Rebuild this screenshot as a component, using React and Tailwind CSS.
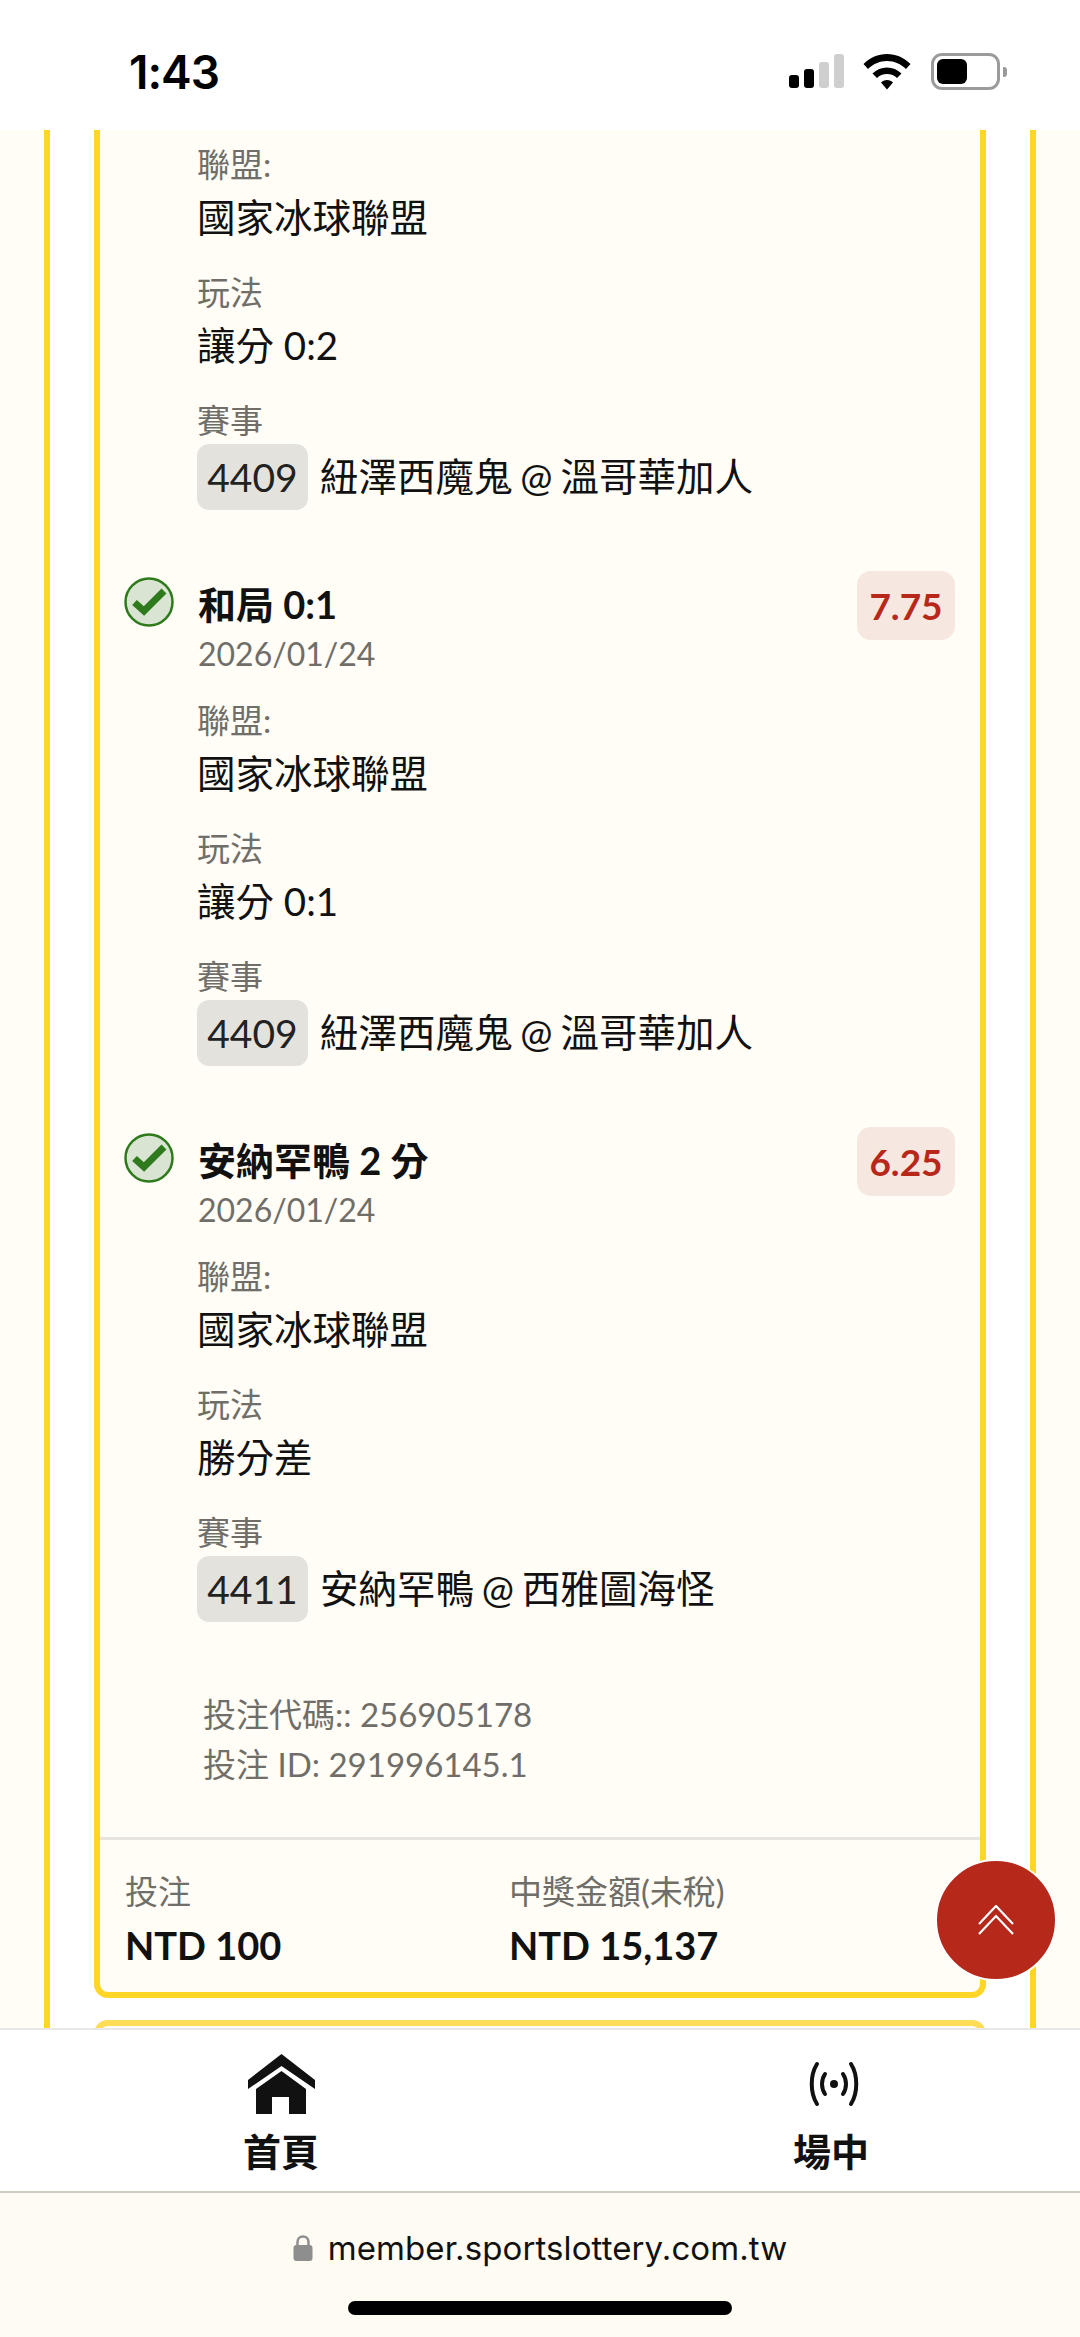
// Bet slip detail on a phone - selections, totals, bottom nav
import React from 'react';

const selections = [
  { id: 's0', league: '國家冰球聯盟', market: '讓分 0:2', code: '4409', match: '紐澤西魔鬼 @ 溫哥華加人', cut: true },
  { id: 's1', title: '和局 0:1', price: '7.75', date: '2026/01/24', league: '國家冰球聯盟', market: '讓分 0:1', code: '4409', match: '紐澤西魔鬼 @ 溫哥華加人' },
  { id: 's2', title: '安納罕鴨 2 分', price: '6.25', date: '2026/01/24', league: '國家冰球聯盟', market: '勝分差', code: '4411', match: '安納罕鴨 @ 西雅圖海怪' },
];

const CheckIcon = () => (
  <svg width="50" height="50" viewBox="0 0 50 50" className="shrink-0 -mt-[2px]">
    <circle cx="25" cy="25" r="23.5" fill="#d9e5d2" stroke="#2f7a1d" strokeWidth="2.5" />
    <path d="M10.5 25.5 L20 34 L40 14" fill="none" stroke="#2f7a1d" strokeWidth="7" />
  </svg>
);

const StatusBar = () => (
  <div className="h-[130px] shrink-0 bg-white flex items-start justify-between pl-[129px] pr-[73px] pt-[47px]">
    <span className="text-[46px] leading-[50px] font-semibold text-black font-['Inter',sans-serif] tracking-[-1px]">1:43</span>
    <div className="flex items-start pt-[7px]">
      <div className="flex items-end gap-[5px] h-[35px] pb-px">
        <div className="w-[10px] h-[13px] rounded-[3px] bg-black" />
        <div className="w-[10px] h-[19px] rounded-[3px] bg-black" />
        <div className="w-[10px] h-[26px] rounded-[3px] bg-[#cfcfcf]" />
        <div className="w-[10px] h-[34px] rounded-[3px] bg-[#cfcfcf]" />
      </div>
      <svg width="48" height="36" viewBox="0 0 48 36" className="ml-[19px]">
        <path d="M24 0 C33 0 41 3.5 47.5 10 L43 15 C38 10 31.5 7 24 7 C16.5 7 10 10 5 15 L0.5 10 C7 3.5 15 0 24 0Z" />
        <path d="M24 13.5 C29.5 13.5 34.5 15.5 38.5 19.5 L34 24 C31.5 21.5 28 20 24 20 C20 20 16.5 21.5 14 24 L9.5 19.5 C13.5 15.5 18.5 13.5 24 13.5Z" />
        <path d="M24 26 C26.5 26 28.500 27 30 28.500 L24 35.500 L18 28.500 C19.500 27 21.500 26 24 26Z" />
      </svg>
      <div className="ml-[20px] w-[69px] h-[37px] -mt-px rounded-[11px] border-[3px] border-[#9b9b9b] p-[3px] bg-white">
        <div className="w-[30px] h-full rounded-[6px] bg-black" />
      </div>
      <div className="ml-[3px] mt-[13px] w-[4px] h-[10px] rounded-r-[3px] bg-[#9b9b9b]" />
    </div>
  </div>
);

const Field = ({ label, children }) => (
  <div>
    <div className="h-[48px] leading-[48px] text-[33px] text-[#6f6e69]">{label}</div>
    {children}
  </div>
);

const Selection = ({ item }) => (
  <div className={item.cut ? 'pb-[69px]' : 'pb-[69px] flex flex-col'}>
    {!item.cut && (
      <div className="flex items-start pl-[24px] pr-[25px]">
        <CheckIcon />
        <div className="ml-[24px] flex-1">
          <div className="h-[50px] leading-[50px] text-[38px] font-bold text-[#111]">{item.title}</div>
          <div className="h-[47px] leading-[50px] text-[32px] text-[#6f6e69]">{item.date}</div>
        </div>
        <div className="-mt-[8px] w-[98px] h-[69px] rounded-[14px] bg-[#f6e8e1] flex items-center justify-center text-[37px] font-bold text-[#b8281a]">
          {item.price}
        </div>
      </div>
    )}
    <div className={item.cut ? 'pl-[97px] pt-[10px]' : 'pl-[97px] pt-[20px]'}>
      <Field label="聯盟:">
        <div className="h-[60px] leading-[58px] text-[38.500px] text-[#111] mb-[20px]">{item.league}</div>
      </Field>
      <Field label="玩法">
        <div className="h-[60px] leading-[58px] text-[38.500px] text-[#111] mb-[20px]">{item.market}</div>
      </Field>
      <Field label="賽事">
        <div className="flex items-center h-[66px]">
          <span className="w-[111px] h-[66px] rounded-[12px] bg-[#e4e2dd] flex items-center justify-center text-[39px] text-[#222]">{item.code}</span>
          <span className="ml-[12px] text-[38.500px] text-[#111] [word-spacing:-2px]">{item.match}</span>
        </div>
      </Field>
    </div>
  </div>
);

const BottomNav = () => (
  <div className="h-[165px] shrink-0 bg-white border-t-[2px] border-[#e8e8e8] border-b-[2px] border-b-[#cfcbc3] flex justify-between pl-[244px] pr-[212px] font-['Noto_Sans_CJK_TC',sans-serif]">
    <div className="flex flex-col items-center pt-[24px] w-[74px]">
      <svg width="67" height="60" viewBox="0 0 67 60" className="shrink-0 text-[#111]" fill="currentColor">
        <path d="M33.500 0 L67 26 V35 L33.500 12 L0 35 V26Z" />
        <path d="M33.500 17 L58 35 V60 H41 V43 H24 V60 H8 V35Z" />
      </svg>
      <span className="mt-[14px] text-[38px] leading-[44px] font-bold text-[#111] whitespace-nowrap">首頁</span>
    </div>
    <div className="flex flex-col items-center pt-[24px] w-[74px]">
      <svg width="52" height="60" viewBox="0 0 52 60" className="shrink-0 translate-x-[3px]" fill="none" stroke="#111" strokeWidth="4" strokeLinecap="round">
        <path d="M9 10 C2 21 2 39 9 50" />
        <path d="M43 10 C50 21 50 39 43 50" />
        <path d="M17 20 C13 26 13 34 17 40" />
        <path d="M35 20 C39 26 39 34 35 40" />
        <circle cx="26" cy="30" r="4" fill="#111" stroke="none" />
      </svg>
      <span className="mt-[14px] text-[38px] leading-[44px] font-bold text-[#111] whitespace-nowrap">場中</span>
    </div>
  </div>
);

const AddressBar = () => (
  <div className="flex-none h-[144px] bg-[#fefbf3] flex flex-col items-center">
    <div className="flex items-center mt-[30px] h-[50px] text-[#111]">
      <svg width="20" height="26" viewBox="0 0 20 26">
        <path d="M4.500 11 V7 C4.500 3.500 7 1.500 10 1.500 C13 1.500 15.500 3.500 15.500 7 V11" fill="none" stroke="#8e8e8e" strokeWidth="2.500" />
        <rect x="0.500" y="10" width="19" height="16" rx="3" fill="#8e8e8e" />
      </svg>
      <span className="ml-[15px] text-[33px] leading-[50px] tracking-[0.1px] font-['Inter',sans-serif]">member.sportslottery.com.tw</span>
    </div>
    <div className="mt-[28px] w-[384px] h-[14px] rounded-full bg-black" />
  </div>
);

export default function App() {
  return (
    <div className="relative h-[2337px] flex flex-col overflow-hidden bg-[#fffdf6] font-['Lato','Noto_Sans_CJK_TC',sans-serif]">
      <StatusBar />

      <main className="flex-1 min-h-0 overflow-hidden px-[44px]">
        <div className="border-x-[6px] border-[#ffd526] bg-white px-[44px] pb-[40px]">
          {/* Current slip, cut off at the top of the scroll area */}
          <div className="bg-[#fffdf6] border-x-[6px] border-b-[6px] border-[#ffd526] rounded-b-[14px]">
            {selections.map((item) => (
              <Selection key={item.id} item={item} />
            ))}

            <div className="pl-[103px] -mt-[2px] pb-[48px] text-[33px] leading-[50px] text-[#6f6e69]">
              <div>投注代碼:: 256905178</div>
              <div>投注 ID: 291996145.1</div>
            </div>

            <div className="border-t-[3px] border-[#e6e4de] pl-[25px] pt-[30px] pb-[16px] flex">
              <div className="w-[384px]">
                <div className="h-[46px] leading-[42px] text-[33px] text-[#6f6e69]">投注</div>
                <div className="h-[60px] leading-[58px] text-[38px] font-bold text-[#111]">NTD 100</div>
              </div>
              <div>
                <div className="h-[46px] leading-[42px] text-[33px] text-[#6f6e69]">中獎金額(未稅)</div>
                <div className="h-[60px] leading-[58px] text-[38px] font-bold text-[#111]">NTD 15,137</div>
              </div>
            </div>
          </div>

          {/* Next slip peeking out above the nav */}
          <div className="mt-[22px] h-[40px] bg-[#fffdf6] border-x-[6px] border-t-[6px] border-[#ffdc55] rounded-t-[14px]" />
        </div>
      </main>

      <BottomNav />
      <AddressBar />

      {/* Back to top */}
      <button className="absolute left-[935px] top-[1859px] w-[122px] h-[122px] rounded-full bg-[#b5281a] border-[2px] border-white flex items-center justify-center">
        <svg width="36" height="30" viewBox="0 0 36 30" fill="none" stroke="white" strokeWidth="2.200">
          <path d="M1 19 L18 1 L35 19" />
          <path d="M1 29 L18 11 L35 29" />
        </svg>
      </button>
    </div>
  );
}
